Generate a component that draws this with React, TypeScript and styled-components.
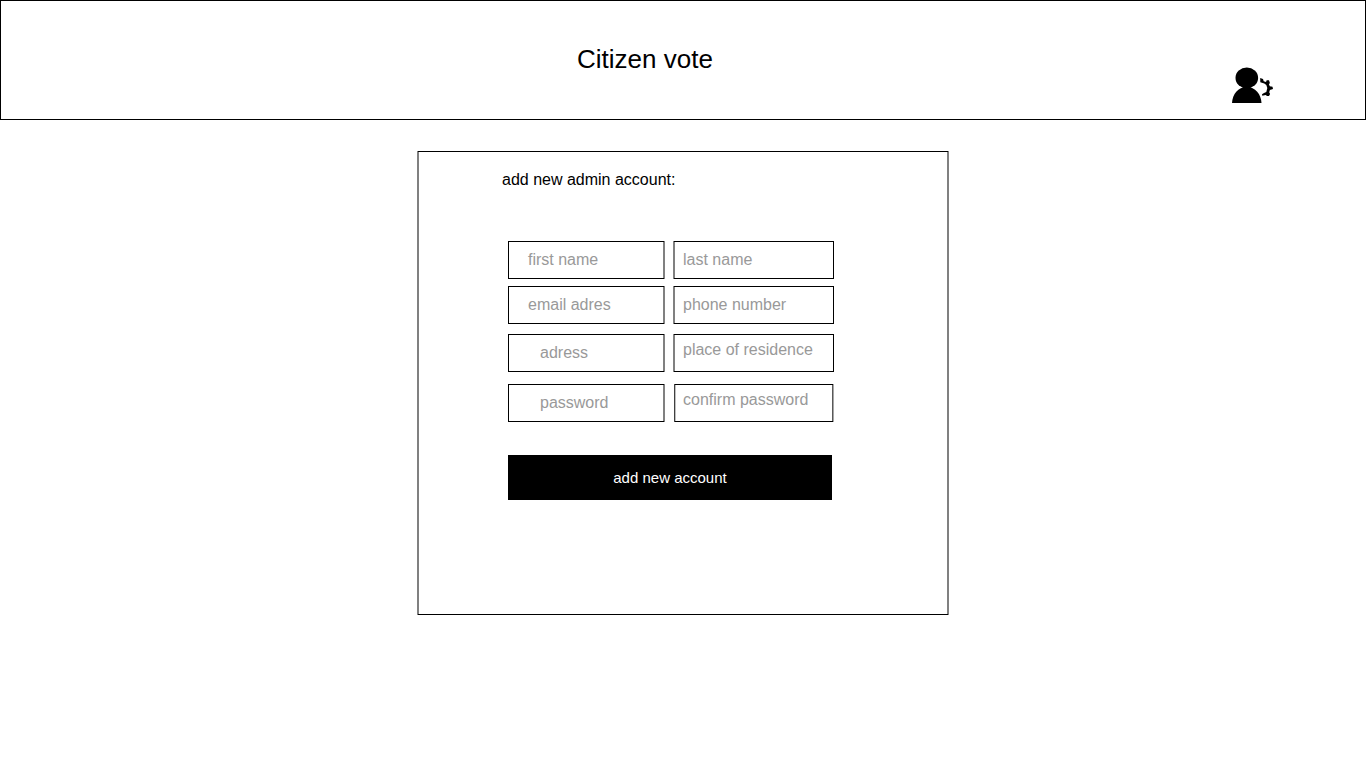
import React from "react";
import styled, { createGlobalStyle, css } from "styled-components";

const GlobalStyle = createGlobalStyle`
  * { box-sizing: border-box; }
  body {
    margin: 0;
    background: #fff;
    color: #000;
    font-family: "Liberation Sans", Arial, sans-serif;
    font-size: 16px;
    overflow: hidden;
  }
`;

/* One-pixel frame whose sides are two columns wide, each with its own shade. */
const frame = (l1: string, l2: string, r2: string, r1: string) => css`
  background:
    linear-gradient(${l1}, ${l1}) 0 0 / 1px 100% no-repeat,
    linear-gradient(${r1}, ${r1}) 100% 0 / 1px 100% no-repeat,
    linear-gradient(#000, #000) 0 0 / 100% 1px no-repeat,
    linear-gradient(#000, #000) 0 100% / 100% 1px no-repeat,
    linear-gradient(${l2}, ${l2}) 1px 0 / 1px 100% no-repeat,
    linear-gradient(${r2}, ${r2}) calc(100% - 1px) 0 / 1px 100% no-repeat,
    #fff;
`;

const Page = styled.div`
  display: flex;
  flex-direction: column;
  height: 768px;
`;

const Header = styled.header`
  display: flex;
  justify-content: space-between;
  align-items: flex-start;
  height: 120px;
  padding: 0 91px 0 576px;
  border: 1px solid #000;
`;

const Title = styled.h1`
  margin: 43px 0 0;
  font-size: 26px;
  line-height: 30px;
  font-weight: 400;
  white-space: nowrap;
`;

const AccountIcon = styled.svg`
  display: block;
  width: 42px;
  height: 36px;
  margin-top: 66px;
`;

const Panel = styled.form`
  width: 532px;
  height: 464px;
  margin: 31px 0 0 417px;
  padding: 20px 0 0 85px;
  ${frame("#808080", "#808080", "#808080", "#808080")}
`;

const Heading = styled.h2`
  margin: 0;
  font-size: 16px;
  line-height: 18px;
  font-weight: 400;
`;

const Fields = styled.div`
  padding: 52px 0 0 6px;
`;

const Row = styled.div<{ $gap: number }>`
  display: flex;
  gap: 8px;
  margin-bottom: ${(p) => p.$gap}px;
`;

const Field = styled.div`
  height: 38px;
  color: #999;
  line-height: 18px;
  white-space: nowrap;
`;

const LeftField = styled(Field)<{ $indent: number }>`
  width: 157px;
  padding: 10px 0 0 ${(p) => p.$indent}px;
  ${frame("#000", "#fff", "#808080", "#808080")}
`;

const RightField = styled(Field)<{ $raised?: boolean }>`
  width: 161px;
  padding: ${(p) => (p.$raised ? 7 : 10)}px 0 0 10px;
  ${frame("#808080", "#808080", "#fff", "#000")}
`;

const ConfirmField = styled(RightField)`
  width: 160px;
  margin-left: 1px;
  padding-left: 9px;
  ${frame("#404040", "#bfbfbf", "#595959", "#a6a6a6")}
`;

const Submit = styled.button`
  display: block;
  width: 324px;
  height: 45px;
  margin: 0;
  padding: 0;
  border: 0;
  background: #000;
  color: #fff;
  font: 15px/45px "Liberation Sans", Arial, sans-serif;
`;

export default function App() {
  return (
    <>
      <GlobalStyle />
      <Page>
        <Header>
          <Title>Citizen vote</Title>
          <AccountIcon viewBox="0 0 42 36" aria-label="Account settings">
            <ellipse cx="14.8" cy="10.9" rx="11.3" ry="10.3" />
            <path d="M0 36C0.5 27 6 20 14.7 20S29 27 29.5 36Z" />
            <path d="M28.2 11L31 12L31.7 14.3L34 15L34.7 13.2L37 13.2L37.9 16L36.9 17.3L37.8 19.3L40.5 19.7L41 22L37.9 23L37.2 25.3L38.1 26.9L37 29L35 29L33.7 27.9L30.3 28.8L30 27.2L32 26L34.3 25L35.3 21L34.3 18L32.3 16.5L28.3 15.3Z" />
          </AccountIcon>
        </Header>
        <Panel>
          <Heading>add new admin account:</Heading>
          <Fields>
            <Row $gap={7}>
              <LeftField $indent={20}>first name</LeftField>
              <RightField>last name</RightField>
            </Row>
            <Row $gap={10}>
              <LeftField $indent={20}>email adres</LeftField>
              <RightField>phone number</RightField>
            </Row>
            <Row $gap={12}>
              <LeftField $indent={32}>adress</LeftField>
              <RightField $raised>place of residence</RightField>
            </Row>
            <Row $gap={33}>
              <LeftField $indent={32}>password</LeftField>
              <ConfirmField $raised>confirm password</ConfirmField>
            </Row>
            <Submit type="button">add new account</Submit>
          </Fields>
        </Panel>
      </Page>
    </>
  );
}
